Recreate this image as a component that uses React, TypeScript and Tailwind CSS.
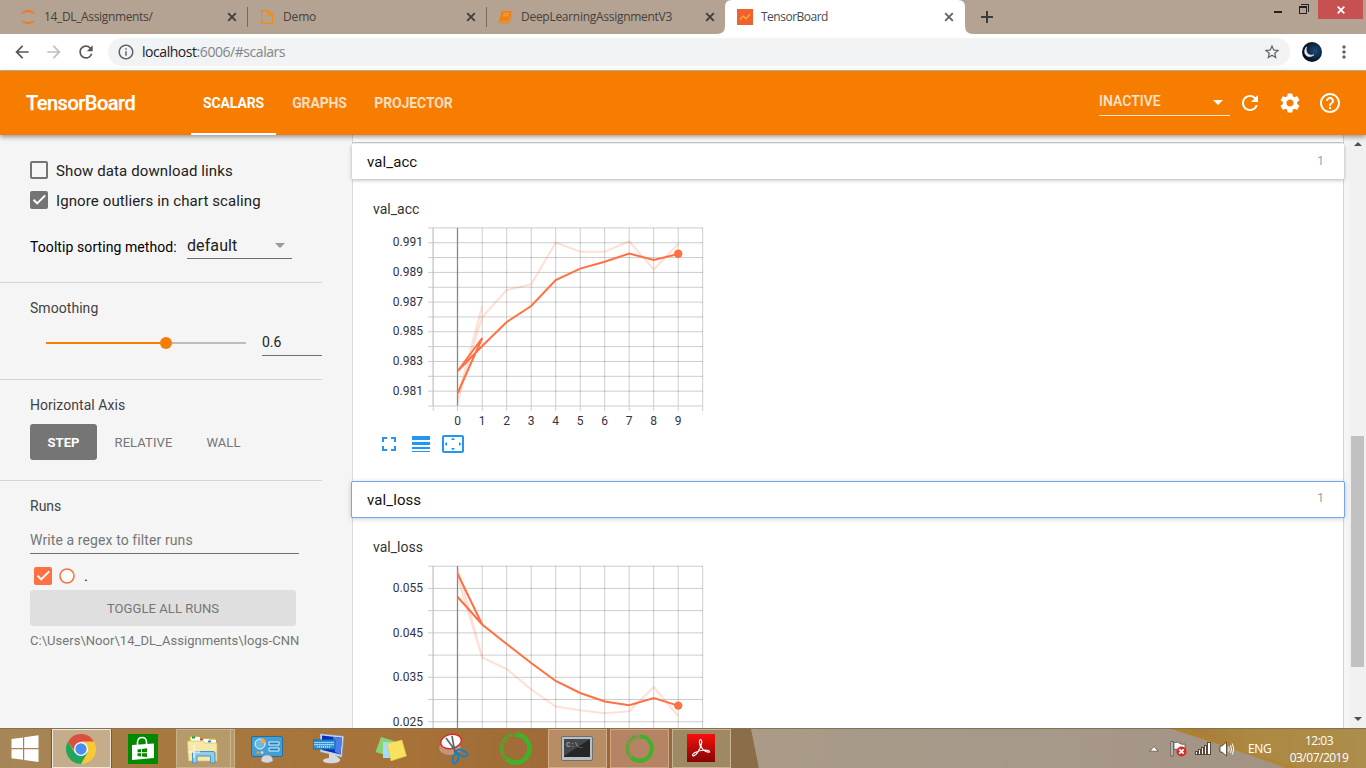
import React from "react";
import {
  MdArrowBack,
  MdArrowForward,
  MdRefresh,
  MdSettings,
  MdHelpOutline,
  MdInfoOutline,
  MdStarBorder,
  MdMoreVert,
  MdFullscreen,
  MdLineWeight,
  MdSettingsOverscan,
  MdArrowDropDown,
} from "react-icons/md";

const SEGOE = "font-['Open_Sans','Noto_Sans',sans-serif]";

function Cross({ className }: { className: string }) {
  return (
    <svg width="10" height="10" viewBox="0 0 10 10" className={className}>
      <path d="M1.2 1.2 8.8 8.8M8.8 1.2 1.2 8.8" stroke="currentColor" strokeWidth="1.9" fill="none" />
    </svg>
  );
}

function Tab({ icon, title, text, divider }: { icon: React.ReactNode; title: string; text: string; divider?: boolean }) {
  return (
    <div className="flex h-[34px] w-[239px] shrink-0 items-center text-[#45413e]">
      <span className="flex w-[16px] shrink-0 justify-center">{icon}</span>
      <span className={`flex-1 whitespace-nowrap text-[12px] leading-[16px] ${text}`}>{title}</span>
      <Cross className="text-[#3f3f40]" />
      <span className={`ml-[10px] mr-[11px] h-5 w-px ${divider ? "bg-[#756a60]" : ""}`} />
    </div>
  );
}

function TabStrip() {
  return (
    <div className={`relative flex h-[34px] shrink-0 items-center bg-[#b4a392] pl-[20px] ${SEGOE}`}>
      <Tab
        divider
        text="ml-[8px] tracking-[-0.35px]"
        title="14_DL_Assignments/"
        icon={
          <svg width="16" height="16" viewBox="0 0 16 16">
            <path d="M1 5.3C3 -.5 13 -.5 15 5.3 11.500 2.400 4.500 2.400 1 5.300Z" fill="#f37726" />
            <path d="M1 10.700C3 16.500 13 16.500 15 10.700 11.500 13.600 4.500 13.600 1 10.700Z" fill="#f37726" />
          </svg>
        }
      />
      <Tab
        divider
        text="ml-[8px] tracking-[-0.15px]"
        title="Demo"
        icon={
          <svg width="16" height="16" viewBox="0 0 16 16">
            <path d="M2.600 1.600H9.500L13.400 5.500V14.400H2.600ZM9.300 1.600V5.800H13.400" fill="none" stroke="#f58a10" strokeWidth="1.300" />
          </svg>
        }
      />
      <Tab
        text="ml-[7px] tracking-[-0.28px]"
        title="DeepLearningAssignmentV3"
        icon={
          <svg width="16" height="16" viewBox="0 0 16 16">
            <path d="M4.700 2H13q1 0 .7 1L11.300 11q-.3 1-1.300 1H3.300q-1 .2-.7 1.200H10.500q1 0 1.300-1L14 5q.6.400.4 1.200L12.300 13q-.4 1.300-1.700 1.300H2.800Q1 14.200 1 12.300L3.300 3.300Q3.600 2 4.700 2Z" fill="#f98006" />
            <path d="M5.700 4.600H11.300M5.100 6.800H10.700" stroke="#cfb18b" strokeWidth=".9" />
          </svg>
        }
      />
      <div className="absolute left-[717px] top-0 flex h-[34px] w-[256px] items-center text-[#4a4b4e]">
        <svg className="absolute inset-0" width="256" height="34">
          <path d="M0 34Q8 34 8 26V7Q8 0 15 0H241Q248 0 248 7V26Q248 34 256 34Z" fill="#fff" />
        </svg>
        <svg className="relative ml-[20px]" width="16" height="16" viewBox="0 0 16 16">
          <path d="M0 0H16V16H0Z" fill="#f0622b" />
          <path d="M3 10.500 6.300 7.100 9 9.700 13 5.200" fill="none" stroke="#fbab32" strokeWidth="1.400" />
        </svg>
        <span className="relative ml-[8px] flex-1 text-[12px] leading-[16px] tracking-[-0.5px]">TensorBoard</span>
        <Cross className="relative mr-[19px] text-[#5f6368]" />
      </div>
      <svg className="absolute left-[981px] top-[11px]" width="12" height="12">
        <path d="M6 0V12M0 6H12" stroke="#3a3b3d" strokeWidth="2" />
      </svg>
      <div className="absolute right-[3px] top-0 flex h-[19px] items-start">
        <span className="mr-[17px] mt-[11px] h-[2px] w-[8px] bg-[#222]" />
        <svg className="mr-[9px] mt-[4px]" width="10" height="10" viewBox="0 0 10 10" shapeRendering="crispEdges">
          <path d="M.5 3.500H7.500V9.500H.5ZM0 2.500H8" fill="none" stroke="#222" />
          <path d="M2 .5H9.500V7.500" fill="none" stroke="#222" />
        </svg>
        <span className="flex h-[19px] w-[45px] items-center justify-center bg-[#c75050] text-white">
          <svg width="8" height="8" viewBox="0 0 8 8">
            <path d="M.7.7 7.300 7.300M7.300.7.7 7.300" stroke="currentColor" strokeWidth="1.800" />
          </svg>
        </span>
      </div>
    </div>
  );
}

function AddressBar() {
  return (
    <div className={`flex h-[37px] shrink-0 items-center border-b border-[#b9b5b5] bg-white pl-[12px] ${SEGOE}`}>
      <MdArrowBack className="text-[#55585d]" size={20} />
      <MdArrowForward className="ml-[12px] text-[#bdbfc1]" size={20} />
      <MdRefresh className="ml-[12px] text-[#55585d]" size={20} />
      <div className="ml-[12px] flex h-[28px] w-[1182px] items-center rounded-full bg-[#f1f3f4] pl-[9px]">
        <MdInfoOutline className="text-[#5f6368]" size={18} />
        <span className="ml-[7px] flex-1 text-[14px] leading-[20px] tracking-[-0.45px] text-[#80868b]">
          <span className="text-[#202124]">localhost</span>:6006/#scalars
        </span>
        <MdStarBorder className="mr-[9px] text-[#5f6368]" size={18} />
      </div>
      <svg className="ml-[12px]" width="20" height="20" viewBox="0 0 20 20">
        <defs>
          <radialGradient id="sky" cx=".65" cy=".45" r=".55">
            <stop offset="0" stopColor="#1d4b7c" />
            <stop offset="1" stopColor="#06101f" />
          </radialGradient>
        </defs>
        <circle cx="10" cy="10" r="10" fill="url(#sky)" />
        <path d="M4.500 4.800C-.5 11 5.500 18 12 12.800 6.500 14.500 3.200 10.500 4.500 4.800Z" fill="#e4ecf4" stroke="#e4ecf4" strokeWidth=".6" />
      </svg>
      <MdMoreVert className="ml-[12px] text-[#5f6368]" size={20} />
    </div>
  );
}

function Header() {
  return (
    <header className="relative z-20 flex h-[64px] shrink-0 items-center bg-[#f77d00] pl-[26px] text-white shadow-[0_2px_5px_rgba(0,0,0,0.4)]">
      <h1 className="w-[165px] text-[20px] font-medium leading-none tracking-[-0.5px] [-webkit-text-stroke:0.25px_#fff]">TensorBoard</h1>
      <nav className="flex h-full flex-1 text-[14px] font-bold tracking-[-0.12px]">
        <span className="flex h-full w-[85px] items-center justify-center border-b-[2px] border-t-[2px] border-t-transparent border-b-white">SCALARS</span>
        <span className="flex h-full w-[87px] items-center justify-center text-white/75">GRAPHS</span>
        <span className="flex h-full w-[101px] items-center justify-center text-white/75">PROJECTOR</span>
      </nav>
      <div className="mr-[8px] mt-[-1px] flex h-[27px] w-[131px] items-center border-b border-[#fde5cb] text-[14px] font-medium text-white/80">
        <span className="flex-1 pb-[2px]">INACTIVE</span>
        <MdArrowDropDown size={24} className="text-white" />
      </div>
      <MdRefresh size={24} className="mr-[16px]" />
      <MdSettings size={24} className="mr-[16px]" />
      <MdHelpOutline size={24} className="mr-[24px]" />
    </header>
  );
}

function Check({ color, checked }: { color: string; checked?: boolean }) {
  return (
    <svg width="18" height="18" viewBox="0 0 18 18" className={`shrink-0 ${color}`}>
      {checked ? (
        <>
          <rect width="18" height="18" rx="2" fill="currentColor" />
          <path d="M3.600 8.800 7.200 12.400 15.200 4.400" fill="none" stroke="#fff" strokeWidth="2" />
        </>
      ) : (
        <rect x="1" y="1" width="16" height="16" rx="1" fill="none" stroke="currentColor" strokeWidth="2" />
      )}
    </svg>
  );
}

function Sidebar() {
  return (
    <aside className="flex w-[353px] shrink-0 flex-col border-r border-[#dadada] bg-[#f5f5f5] text-[14px] text-[#424242]">
      <section className="h-[148px] w-[322px] border-b border-[#d5d5d5] pl-[30px] pt-[20px]">
        <div className="flex h-[30px] items-center gap-2 text-[15px] tracking-[0.11px] text-[#212121]">
          <Check color="text-[#747474]" /> <span className="pt-[2px]">Show data download links</span>
        </div>
        <div className="flex h-[30px] items-center gap-2 text-[15px] tracking-[0.11px] text-[#212121]">
          <Check color="text-[#747474]" checked /> <span className="pt-[2px]">Ignore outliers in chart scaling</span>
        </div>
        <div className="flex pt-[16px] text-black">
          <span className="w-[157px] pt-[6px] leading-[20px] tracking-[0.08px]">Tooltip sorting method:</span>
          <span className="flex h-[28px] w-[105px] items-center border-b border-[#6f6f6f] text-[16px] tracking-[0.1px] text-[#212121]">
            <span className="flex-1 pt-[2px]">default</span>
            <MdArrowDropDown size={24} className="text-[#9a9a9a]" />
          </span>
        </div>
      </section>
      <section className="h-[97px] w-[322px] border-b border-[#d5d5d5] pl-[30px] pt-[15px]">
        <h3 className="leading-[20px] tracking-[0.05px]">Smoothing</h3>
        <div className="flex items-center pt-[9px]">
          <span className="ml-[16px] flex w-[200px] items-center pt-[2px]">
            <span className="h-[2px] w-[114px] bg-[#f77d00]" />
            <span className="h-[12px] w-[12px] rounded-full bg-[#f77d00]" />
            <span className="h-[2px] flex-1 bg-[#bdbdbd]" />
          </span>
          <span className="ml-[16px] flex h-[29px] w-[60px] items-center border-b border-[#6f6f6f] pt-[2px] text-[#212121]">0.6</span>
        </div>
      </section>
      <section className="h-[101px] w-[322px] border-b border-[#d5d5d5] pl-[30px] pt-[15px]">
        <h3 className="leading-[20px] tracking-[0.05px]">Horizontal Axis</h3>
        <div className="mt-[9px] flex h-[36px] text-[13px] text-[#757575]">
          <span className="flex w-[67px] items-center justify-center rounded-[3px] bg-[#757575] pt-[2px] font-bold text-white">STEP</span>
          <span className="flex w-[93px] items-center justify-center pt-[2px] tracking-[0.1px]">RELATIVE</span>
          <span className="flex w-[67px] items-center justify-center pt-[2px] tracking-[0.1px]">WALL</span>
        </div>
      </section>
      <section className="pl-[30px] pt-[15px]">
        <h3 className="leading-[20px]">Runs</h3>
        <div className="mt-[9px] flex h-[29px] w-[269px] items-center border-b border-[#6f6f6f] pt-[2px] tracking-[0.1px] text-[#757575]">Write a regex to filter runs</div>
        <div className="mt-[13px] flex h-[18px] items-center pl-[4px] text-black">
          <Check color="text-[#ff7043]" checked />
          <svg width="16" height="16" className="ml-[7px]">
            <circle cx="8" cy="8" r="7" fill="#fff" stroke="#ff7043" strokeWidth="1.600" />
          </svg>
          <span className="ml-[9px]">.</span>
        </div>
        <div className="mt-[5px] flex h-[36px] w-[266px] items-center justify-center rounded-[3px] bg-[#dfdfdf] pt-[2px] text-[13px] tracking-[0.08px] text-[#757575]">TOGGLE ALL RUNS</div>
        <p className="mt-[5px] whitespace-nowrap text-[13px] leading-[20px] tracking-[0.04px] text-[#757575]">C:\Users\Noor\14_DL_Assignments\logs-CNN</p>
      </section>
    </aside>
  );
}

const X = (n: number) => 84.7 + 24.5 * n;

type ChartProps = {
  rows: number[];
  labels: [number, string][];
  raw: string;
  smooth: string;
  dot: [number, number];
  bottom: number;
  xLabels?: boolean;
};

/* Plot coordinates start at the left edge of the card body and at the top grid line. */
function Chart({ rows, labels, raw, smooth, dot, bottom, xLabels }: ChartProps) {
  return (
    <svg width="345" height="205" viewBox="0 -2 345 205" className="block overflow-hidden font-['Roboto',sans-serif]">
      <g stroke="#000" strokeOpacity=".2" strokeWidth="1">
        {rows.map((y) => (
          <path key={y} d={`M55 ${y}H330`} />
        ))}
        {[-1, 1, 2, 3, 4, 5, 6, 7, 8, 9, 10].map((n) => (
          <path key={n} d={`M${X(n)} 0V${bottom + 5}`} />
        ))}
      </g>
      <path d={`M60 0V${bottom}`} stroke="#ccc" strokeWidth="1" />
      <path d={`M84.500 0V${bottom}`} stroke="#888" strokeWidth="1.300" />
      <path d={`M84.500 ${bottom}v5`} stroke="#ccc" />
      <path d={`M55 ${bottom}H330`} stroke="#ccc" strokeWidth="1" />
      <polyline points={raw} fill="none" stroke="#ff7043" strokeOpacity=".22" strokeWidth="2" />
      <polyline points={smooth} fill="none" stroke="#ff7043" strokeWidth="2" />
      <circle cx={dot[0]} cy={dot[1]} r="4.2" fill="#ff7043" />
      <g fill="#32313f" fontSize="12">
        {labels.map(([y, t]) => (
          <text key={t} x="50" y={y + 4} textAnchor="end">
            {t}
          </text>
        ))}
        {xLabels &&
          [0, 1, 2, 3, 4, 5, 6, 7, 8, 9].map((n) => (
            <text key={n} x={X(n)} y={bottom + 19} textAnchor="middle">
              {n}
            </text>
          ))}
      </g>
    </svg>
  );
}

function CardHeader({ title, focused }: { title: string; focused?: boolean }) {
  return (
    <div
      className={`relative z-10 -mx-px flex shrink-0 items-center justify-between bg-white pl-[15px] pr-[20px] text-[15px] text-[#111] ${
        focused
          ? "mb-px h-[35px] rounded-[1px] pt-px shadow-[0_0_0_1px_#73a4f5,0_1px_5px_1px_rgba(0,0,0,0.2)]"
          : "mb-px h-[35px] pt-[2px] shadow-[0_1px_4px_rgba(0,0,0,0.3)]"
      }`}
    >
      <span className="tracking-[0.1px]">{title}</span>
      <span className="pb-[4px] text-[12px] text-[#a0a0a0]">1</span>
    </div>
  );
}

const accRows = Array.from({ length: 12 }, (_, i) => -0.1 + 14.84 * i);
const lossRows = Array.from({ length: 8 }, (_, i) => 0.2 + 22.22 * i);

function Main() {
  return (
    <main className="flex w-[991px] shrink-0 flex-col border-r border-[#d4d4d4] bg-white">
      <div className="h-[8px] shrink-0 border-b border-[#c9c9c9]" />
      <div className="h-px shrink-0" />
      <CardHeader title="val_acc" />
      <div className="h-[302px] shrink-0 border-b border-[#c9c9c9] pl-[20px] pt-[19px]">
        <h4 className="text-[14px] leading-[20px] text-[#333]">val_acc</h4>
        <div className="mt-[7px] h-[206px]">
          <Chart
            rows={accRows}
            bottom={178}
            xLabels
            labels={[
              [14.3, "0.991"],
              [44, "0.989"],
              [73.8, "0.987"],
              [103.400, "0.985"],
              [133.100, "0.983"],
              [162.900, "0.981"],
            ]}
            raw={`${X(0)},175 ${X(1)},78 ${X(0)},169 ${X(1)},89 ${X(2)},62 ${X(3)},56.300 ${X(4)},14.500 ${X(5)},23.700 ${X(6)},23.700 ${X(7)},13.300 ${X(8)},41.500 ${X(9)},16`}
            smooth={`${X(0)},165 ${X(1)},110 ${X(0)},143 ${X(1)},118 ${X(2)},94 ${X(3)},78 ${X(4)},52 ${X(5)},40.600 ${X(6)},33.800 ${X(7)},25.500 ${X(8)},32 ${X(9)},26`}
            dot={[X(9), 25.7]}
          />
        </div>
        <div className="flex gap-[8px] pl-[4px] text-[#2196f3]">
          <MdFullscreen size={24} />
          <MdLineWeight size={24} />
          <MdSettingsOverscan size={24} />
        </div>
      </div>
      <CardHeader title="val_loss" focused />
      <div className="shrink-0 pl-[20px] pt-[19px]">
        <h4 className="text-[14px] leading-[20px] text-[#333]">val_loss</h4>
        <div className="mt-[7px] h-[205px]">
          <Chart
            rows={lossRows}
            bottom={178}
            labels={[
              [22.200, "0.055"],
              [66.600, "0.045"],
              [111.100, "0.035"],
              [155.500, "0.025"],
            ]}
            raw={`${X(0)},2 ${X(1)},91.500 ${X(0)},12 ${X(1)},91.500 ${X(2)},103 ${X(3)},123.500 ${X(4)},140.500 ${X(5)},144.300 ${X(6)},147.300 ${X(7)},145.300 ${X(8)},121 ${X(9)},150`}
            smooth={`${X(0)},31 ${X(1)},58.500 ${X(0)},8 ${X(1)},58.500 ${X(2)},78 ${X(3)},97 ${X(4)},115 ${X(5)},127 ${X(6)},135.500 ${X(7)},139.300 ${X(8)},132 ${X(9)},139.600`}
            dot={[X(9), 139.6]}
          />
        </div>
      </div>
    </main>
  );
}

function Scrollbar() {
  return (
    <div className="flex flex-1 bg-[#f5f5f5] pl-[5px]">
      <div className="flex w-[17px] flex-col items-center bg-[#f1f1f1]">
        <svg width="10" height="5" viewBox="0 0 10 5" className="mt-[6px]">
          <path d="M1 5 5 1 9 5Z" fill="#505050" />
        </svg>
        <div className="mr-px mt-[290px] h-[231px] w-[13px] bg-[#c1c1c1]" />
        <svg width="10" height="5" viewBox="0 0 10 5" className="mt-[50px]">
          <path d="M1 0 5 4 9 0Z" fill="#505050" />
        </svg>
      </div>
    </div>
  );
}

function Slot({ className, children }: { className?: string; children: React.ReactNode }) {
  return (
    <div className="flex h-[40px] w-[62px] shrink-0 items-center justify-center">
      <div className={`flex h-[39px] w-[59px] items-center justify-center ${className ?? ""}`}>{children}</div>
    </div>
  );
}

const Anaconda = ({ size }: { size: number }) => (
  <svg width={size} height={size} viewBox="0 0 32 32">
    <path d="M16 2.500A13.500 13.500 0 1 1 7 26" fill="none" stroke="#43b02a" strokeWidth="4.600" />
    <path d="M8.500 27A13.500 13.500 0 0 1 15 2.500" fill="none" stroke="#43b02a" strokeWidth="4.200" strokeDasharray="1.800 1.400" strokeOpacity=".85" />
    <path d="M5 25A14.500 14.500 0 0 1 12 2" fill="none" stroke="#43b02a" strokeWidth="1.400" strokeDasharray="2.400 1.600" />
  </svg>
);

function Taskbar() {
  return (
    <footer className={`relative flex h-[40px] shrink-0 overflow-hidden border-t border-[#85714f] bg-[#a4743c] ${SEGOE}`}>
      <svg className="absolute inset-0" width="1366" height="40" preserveAspectRatio="none">
        <defs>
          <linearGradient id="bar" x2="1">
            <stop offset="0" stopColor="#a1804f" />
            <stop offset=".1" stopColor="#a67a42" />
            <stop offset=".3" stopColor="#a67238" />
            <stop offset=".45" stopColor="#9b6736" />
            <stop offset=".52" stopColor="#8b6e47" />
            <stop offset="1" stopColor="#8b6e47" />
          </linearGradient>
          <linearGradient id="gold" x2="1">
            <stop offset="0" stopColor="#a17a35" />
            <stop offset=".4" stopColor="#ad8841" />
            <stop offset="1" stopColor="#ac8d4b" />
          </linearGradient>
          <linearGradient id="stone" x2="1">
            <stop offset="0" stopColor="#a99b87" />
            <stop offset=".5" stopColor="#a6988a" />
            <stop offset="1" stopColor="#a19080" />
          </linearGradient>
        </defs>
        <rect width="1366" height="40" fill="url(#bar)" />
        <path d="M751 0H1366V40H759Z" fill="url(#stone)" />
        <path d="M1172 0H1366V40H1290Q1232 19 1172 0Z" fill="url(#gold)" />
        <path d="M1172 0H1190Q1240 22 1305 40H1288Q1230 18 1172 0Z" fill="#b28329" opacity=".6" />
      </svg>
      <div className="relative flex w-full items-center">
        <div className="flex h-[40px] w-[50px] shrink-0 items-center justify-center bg-white/5">
          <svg width="28" height="28" viewBox="0 0 28 28" fill="#fff">
            <path d="M.5 4 12 2.400V13H.5ZM13.200 2.200 27.500.3V13H13.200ZM.5 14.300H12V24.800L.5 23.200ZM13.200 14.300H27.500V27L13.200 25Z" />
          </svg>
        </div>
        <Slot className="border border-[#eee6da] bg-[#c5ac8b] outline outline-[#7b5b35]">
          <svg width="30" height="30" viewBox="0 0 30 30">
            <circle cx="15" cy="15" r="15" fill="#fcc934" />
            <path d="M2 7.500A15 15 0 0 1 28 7.500H15L9 18Z" fill="#d94f42" />
            <path d="M2 7.500A15 15 0 0 0 15 30L21.500 18.500 15 15 8.500 18.500Z" fill="#22a45d" />
            <circle cx="15" cy="15" r="7" fill="#fff" />
            <circle cx="15" cy="15" r="5.700" fill="#4b8cf5" />
          </svg>
        </Slot>
        <Slot>
          <svg width="30" height="30" viewBox="0 0 30 30">
            <rect width="30" height="30" fill="#008a00" />
            <path d="M4 11 26 9.500V24L4 26Z" fill="#fff" />
            <path d="M9.500 12V8Q10 3.500 14 3.500T18.500 7.500V11" fill="none" stroke="#fff" strokeWidth="1.600" />
            <path d="M9.500 15.500 13 15V18.200H9.500ZM14 15 19 14.300V18.200H14ZM9.500 19.200H13V22.500L9.500 22ZM14 19.200H19V23L14 22.500Z" fill="#008a00" />
          </svg>
        </Slot>
        <Slot className="relative border border-[#c8b08b] bg-[#b69a6c]">
          <svg width="34" height="32" viewBox="0 0 34 32" className="-ml-[7px]">
            <path d="M4 3H14L16 5H31V27H4Z" fill="#e2c66c" stroke="#b8963d" />
            <path d="M6 4H15V8H6Z" fill="#fff" />
            <path d="M7 3.500H10V5.500H7Z" fill="#10a428" />
            <path d="M13 6H24V10H13Z" fill="#fff" />
            <path d="M15 5.500H18V7.500H15Z" fill="#d24a26" />
            <path d="M21 7H31V11H21Z" fill="#fff" />
            <path d="M23 7.500H26V9.500H23Z" fill="#2588d8" />
            <path d="M2.500 8H18L20 10H32V28H3.500Z" fill="#f6e8a6" stroke="#d7bd6b" strokeWidth=".7" />
            <path d="M7.500 30V20Q7.500 18.500 9 18.500H28Q30 18.500 30 20V30H25.500V23H12V30Z" fill="#92cce9" stroke="#4a94c0" />
            <path d="M9 12V25M3 19H15" stroke="#fff" />
          </svg>
          <span className="absolute right-[3px] top-[-1px] h-[39px] w-px bg-[#cdb58e]" />
        </Slot>
        <Slot>
          <svg width="32" height="30" viewBox="0 0 32 30">
            <rect x=".5" y="2.500" width="31" height="20" rx="1.500" fill="#459ed3" stroke="#236fa5" />
            <circle cx="9" cy="10" r="5" fill="#6cb9e4" stroke="#e6f5fc" />
            <path d="M10 9V4A5 5 0 0 1 15 9Z" fill="#f8a831" />
            <path d="M18 8H28V11H18ZM18 14H28V17H18Z" fill="#1683bd" stroke="#def2fb" />
            <circle cx="7" cy="18.500" r="1.500" fill="#f69a25" />
            <circle cx="11" cy="18.500" r="1.500" fill="#b8ddf2" />
            <path d="M10 27Q10 21 16 21T22 27Q16 31 10 27Z" fill="#d5d8db" stroke="#888" strokeWidth=".5" />
          </svg>
        </Slot>
        <Slot>
          <svg width="32" height="32" viewBox="0 0 32 32">
            <path d="M7 .5 31 3 29 24.500 7 19Z" fill="#cfd4dc" stroke="#76808e" strokeWidth=".6" />
            <path d="M9 2.500 29 4.800 27.500 21.500 9 17Z" fill="#0730bf" />
            <path d="M20 3.800 29 4.800 27.500 21.500 22 19Z" fill="#4c7eea" />
            <path d="M16 20 22 22 27 26Q28 29 22 30 12 31 10 28 9 26 16 25Z" fill="#d6d9df" />
            <rect x="0" y="7" width="22" height="9" fill="#2f92da" stroke="#1b69a8" />
            <path d="M1.500 9.500H21M1.500 11.600H21M4 13.800H18" stroke="#e9f6ff" strokeDasharray="1.200 .8" strokeWidth="1.200" />
          </svg>
        </Slot>
        <Slot>
          <svg width="32" height="28" viewBox="0 0 32 28">
            <path d="M6 2 19 6 14 21 .5 17Z" fill="#8ad276" />
            <path d="M8 7H21V23H8Z" fill="#a5dbfa" />
            <path d="M12 8.500 27 5 31.500 21 16 26Z" fill="#f7e15f" stroke="#dcc13e" strokeWidth=".5" />
          </svg>
        </Slot>
        <Slot>
          <svg width="32" height="32" viewBox="0 0 32 32">
            <ellipse cx="13" cy="15" rx="11" ry="7" fill="#c69577" />
            <ellipse cx="14" cy="8.500" rx="10.500" ry="7" fill="#fafafa" stroke="#d6292c" strokeWidth="1.400" transform="rotate(-12 14 8.500)" />
            <path d="M9 5 20 20M15 3 18 20" stroke="#59636b" strokeWidth="1.600" />
            <ellipse cx="25" cy="20" rx="5.500" ry="2.600" fill="none" stroke="#1680c4" strokeWidth="2" transform="rotate(25 25 20)" />
            <ellipse cx="18.500" cy="25.500" rx="2.700" ry="5" fill="none" stroke="#1680c4" strokeWidth="2" transform="rotate(15 18.500 25.500)" />
          </svg>
        </Slot>
        <Slot>
          <Anaconda size={33} />
        </Slot>
        <Slot className="border border-[#cfad8b] bg-[#b88d66]">
          <svg width="32" height="26" viewBox="0 0 32 26">
            <rect x=".5" y=".5" width="31" height="24" rx="1.500" fill="#b9c0c5" stroke="#6b7074" />
            <rect x="3" y="3" width="26" height="18" fill="#262626" />
            <path d="M3 3H29L3 20Z" fill="#464646" />
            <text x="5" y="11" fontSize="7" fontWeight="bold" fill="#a0a0a0" fontFamily="Liberation Mono">C:\_</text>
          </svg>
        </Slot>
        <Slot className="border border-[#d0a586] bg-[#b48464]">
          <Anaconda size={29} />
        </Slot>
        <Slot className="border border-[#c6b295] bg-[#9f8965]">
          <svg width="28" height="28" viewBox="0 0 28 28" className="mb-[2px]">
            <defs>
              <linearGradient id="pdf" x2="0" y2="1">
                <stop offset="0" stopColor="#f90e0b" />
                <stop offset="1" stopColor="#820605" />
              </linearGradient>
            </defs>
            <rect width="28" height="28" fill="url(#pdf)" />
            <path d="M14 14Q11 6 13.500 5.500 16 6 13.500 13 10 21 6.500 22 4 21 8 18.500 12 16.500 18 16 23 16 22.500 18 20 19 16 15.500 14 13.500 13.500 10" fill="none" stroke="#fff" strokeWidth="1.200" />
          </svg>
        </Slot>
        <div className="ml-auto flex items-center text-white">
          <svg width="10" height="8" viewBox="0 0 9 7" className="mr-[11px] mt-px">
            <path d="M.8 5.500 4.500 1.200 8.200 5.500Z" fill="#fff" stroke="#62564b" strokeWidth=".7" />
          </svg>
          <svg width="18" height="18" viewBox="0 0 18 18" className="mr-[7px]">
            <path d="M1 1.500H3V16H1Z" fill="#fff" stroke="#464039" strokeWidth=".8" />
            <path d="M4 2.500Q8 1.500 10 3.500 12.500 5 15 4V11Q12 12 9 10 7 8.500 4 9.500Z" fill="#fff" stroke="#464039" strokeWidth=".7" />
            <circle cx="11.500" cy="11.500" r="5" fill="#d52b24" />
            <path d="M9.300 9.300 13.700 13.700M13.700 9.300 9.300 13.700" stroke="#fff" strokeWidth="1.800" />
          </svg>
          <svg width="16" height="14" viewBox="0 0 16 14" className="mr-[8px]" shapeRendering="crispEdges">
            <path d="M0 9H3V13H0ZM3 7H6V13H3ZM6 5H9V13H6ZM9 3H12V13H9ZM12 0H16V13H12Z" fill="#544737" />
            <path d="M1 10H2V12H1ZM4 8H5V12H4ZM7 6H8V12H7ZM10 4H11V12H10ZM13 1H15V12H13Z" fill="#fff" />
          </svg>
          <svg width="16" height="16" viewBox="0 0 16 16" className="mr-[13px]">
            <path d="M1 5H3L7.500 1V15L3 11H1Z" fill="#fff" stroke="#3f3527" strokeWidth=".8" />
            <path d="M9.500 5.500Q11 8 9.500 10.500M11.500 4Q13.500 8 11.500 12M13.300 2.500Q16.300 8 13.300 13.500" fill="none" stroke="#fff" />
          </svg>
          <span className="w-[24px] text-[12px] tracking-[-0.4px]">ENG</span>
          <div className="ml-[17px] mr-[17px] flex w-[60px] flex-col items-center whitespace-nowrap text-[12px] leading-[17px] tracking-[-0.5px]">
            <span>12:03</span>
            <span>03/07/2019</span>
          </div>
        </div>
      </div>
    </footer>
  );
}

export default function App() {
  return (
    <div className="flex h-[768px] w-[1366px] flex-col overflow-hidden bg-white font-['Roboto',sans-serif]">
      <TabStrip />
      <AddressBar />
      <Header />
      <div className="flex min-h-0 flex-1 overflow-hidden">
        <Sidebar />
        <Main />
        <Scrollbar />
      </div>
      <Taskbar />
    </div>
  );
}
